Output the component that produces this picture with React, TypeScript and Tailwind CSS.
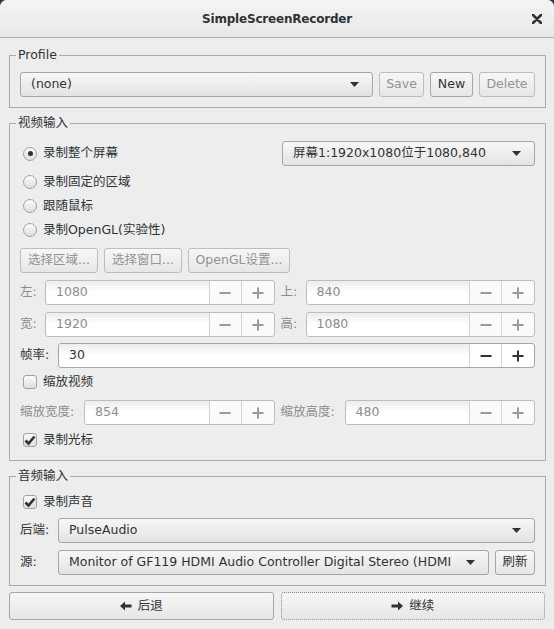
import React from "react";

const FONT = '"DejaVu Sans", "Noto Sans CJK SC", sans-serif';

function Arrow({ className = "" }: { className?: string }) {
  return (
    <svg width="9" height="5" viewBox="0 0 9 5" className={className}>
      <path d="M0 0 H9 L4.5 5 Z" fill="#2e3436" />
    </svg>
  );
}

function Combo({ label, className = "" }: { label: string; className?: string }) {
  return (
    <div
      className={`h-[25px] flex items-center rounded-[3px] border border-[#a6a6a6] bg-linear-to-b from-[#f7f7f7] to-[#e3e3e3] pl-[10px] pr-[13px] text-[#2e3436] ${className}`}
    >
      <span className="flex-1 truncate whitespace-nowrap">{label}</span>
      <Arrow className="shrink-0 ml-[8px]" />
    </div>
  );
}

function Btn({
  label,
  disabled,
  className = "",
}: {
  label: string;
  disabled?: boolean;
  className?: string;
}) {
  return (
    <div
      className={`h-[25px] flex items-center justify-center rounded-[3px] border whitespace-nowrap bg-linear-to-b from-[#f7f7f7] to-[#e6e6e6] ${
        disabled ? "border-[#bdbdbd] text-[#939393]" : "border-[#a6a6a6] text-[#2e3436]"
      } ${className}`}
    >
      {label}
    </div>
  );
}

function Minus({ color }: { color: string }) {
  return (
    <svg width="12" height="12" viewBox="0 0 12 12">
      <rect x="0.5" y="5" width="11" height="2" fill={color} />
    </svg>
  );
}

function Plus({ color }: { color: string }) {
  return (
    <svg width="12" height="12" viewBox="0 0 12 12">
      <rect x="0.5" y="5" width="11" height="2" fill={color} />
      <rect x="5" y="0.5" width="2" height="11" fill={color} />
    </svg>
  );
}

function Spin({ value, disabled }: { value: string; disabled?: boolean }) {
  const c = disabled ? "#9a9a9a" : "#2e3436";
  return (
    <div
      className={`h-[25px] flex-1 flex rounded-[3px] border ${
        disabled ? "border-[#bdbdbd] bg-[#fafafa]" : "border-[#a6a6a6] bg-white"
      }`}
    >
      <div
        className={`flex-1 flex items-center pl-[10px] rounded-l-[3px] bg-linear-to-b from-[#ececec] via-white to-white ${
          disabled ? "text-[#8b8e8f]" : "text-[#2e3436]"
        }`}
      >
        {value}
      </div>
      <div className="w-[32px] flex items-center justify-center border-l border-[#d3d3d3]">
        <Minus color={c} />
      </div>
      <div className="w-[33px] flex items-center justify-center border-l border-[#d3d3d3]">
        <Plus color={c} />
      </div>
    </div>
  );
}

function Radio({ checked, label }: { checked?: boolean; label: string }) {
  return (
    <div className="h-[24px] flex items-center pl-[3px]">
      <div className="w-[14px] h-[14px] rounded-full border border-[#a2a2a2] bg-linear-to-b from-[#fbfbfb] to-[#dedede] flex items-center justify-center">
        {checked && <div className="w-[5px] h-[5px] rounded-full bg-[#2e3436]" />}
      </div>
      <span className="ml-[6px] text-[#2e3436]">{label}</span>
    </div>
  );
}

function Check({ checked, label }: { checked?: boolean; label: string }) {
  return (
    <div className="h-[24px] flex items-center pl-[3px]">
      <div className="w-[14px] h-[14px] rounded-[3px] border border-[#a2a2a2] bg-linear-to-b from-[#fbfbfb] to-[#dedede] flex items-center justify-center">
        {checked && (
          <svg width="12" height="11" viewBox="0 0 12 11">
            <path d="M1.5 5.5 L4.5 8.5 L10.5 1.5" fill="none" stroke="#2e3436" strokeWidth="2.6" />
          </svg>
        )}
      </div>
      <span className="ml-[6px] text-[#2e3436]">{label}</span>
    </div>
  );
}

function Group({
  title,
  className = "",
  children,
}: {
  title: string;
  className?: string;
  children: React.ReactNode;
}) {
  return (
    <fieldset className={`min-w-0 ml-[9px] mr-[8px] border border-[#aaaaaa] px-[10px] ${className}`}>
      <legend className="-ml-[4px] px-[2px] leading-[16px] text-[#2e3436]">{title}</legend>
      {children}
    </fieldset>
  );
}

export default function App() {
  return (
    <div className="w-[554px] h-[629px] bg-[#233a5a]" style={{ fontFamily: FONT }}>
      <div className="w-full h-full rounded-t-[7px] bg-[#ededed] overflow-hidden text-[12.5px]">
        <div className="relative h-[38px] border-b border-[#b3b3b3] bg-linear-to-b from-[#f4f4f4] to-[#e8e8e8] flex items-center justify-center">
          <span className="font-bold text-[12px] tracking-[-0.2px] text-[#2e3436]">SimpleScreenRecorder</span>
          <svg
            width="10"
            height="10"
            viewBox="0 0 10 10"
            className="absolute right-[12px] top-[14px]"
          >
            <path d="M1 1 L9 9 M9 1 L1 9" stroke="#2e3436" strokeWidth="2.6" strokeLinecap="round" />
          </svg>
        </div>

        <Group title="Profile" className="mt-[9px] pt-[9px] pb-[10px]">
          <div className="flex gap-[6px]">
            <Combo label="(none)" className="flex-1" />
            <Btn label="Save" disabled className="w-[45px]" />
            <Btn label="New" className="w-[43px]" />
            <Btn label="Delete" disabled className="w-[56px]" />
          </div>
        </Group>

        <Group title="视频输入" className="mt-[7px] pt-[10px] pb-[8px]">
          <div className="flex items-center h-[25px]">
            <div className="flex-1">
              <Radio checked label="录制整个屏幕" />
            </div>
            <Combo label="屏幕1:1920x1080位于1080,840" className="w-[253px]" />
          </div>
          <div className="mt-[4px]">
            <Radio label="录制固定的区域" />
            <Radio label="跟随鼠标" />
            <Radio label="录制OpenGL(实验性)" />
          </div>
          <div className="flex gap-[6px] mt-[6px]">
            <Btn label="选择区域..." disabled className="w-[78px]" />
            <Btn label="选择窗口..." disabled className="w-[78px]" />
            <Btn label="OpenGL设置..." disabled className="w-[102px]" />
          </div>
          <div className="grid grid-cols-2 gap-x-[6px] gap-y-[7px] mt-[7px] text-[#8b8e8f]">
            <div className="flex items-center">
              <span className="w-[25px]">左:</span>
              <Spin value="1080" disabled />
            </div>
            <div className="flex items-center">
              <span className="w-[25px]">上:</span>
              <Spin value="840" disabled />
            </div>
            <div className="flex items-center">
              <span className="w-[25px]">宽:</span>
              <Spin value="1920" disabled />
            </div>
            <div className="flex items-center">
              <span className="w-[25px]">高:</span>
              <Spin value="1080" disabled />
            </div>
          </div>
          <div className="flex items-center mt-[6px]">
            <span className="w-[38px] text-[#2e3436]">帧率:</span>
            <Spin value="30" />
          </div>
          <div className="mt-[2px]">
            <Check label="缩放视频" />
          </div>
          <div className="grid grid-cols-2 gap-x-[6px] mt-[6px] text-[#8b8e8f]">
            <div className="flex items-center">
              <span className="w-[64px]">缩放宽度:</span>
              <Spin value="854" disabled />
            </div>
            <div className="flex items-center">
              <span className="w-[64px]">缩放高度:</span>
              <Spin value="480" disabled />
            </div>
          </div>
          <div className="mt-[3px]">
            <Check checked label="录制光标" />
          </div>
        </Group>

        <Group title="音频输入" className="mt-[7px] pt-[6px] pb-[10px]">
          <Check checked label="录制声音" />
          <div className="flex items-center mt-[4px]">
            <span className="w-[38px] text-[#2e3436]">后端:</span>
            <Combo label="PulseAudio" className="flex-1" />
          </div>
          <div className="flex items-center mt-[7px]">
            <span className="w-[38px] text-[#2e3436]">源:</span>
            <Combo
              label="Monitor of GF119 HDMI Audio Controller Digital Stereo (HDMI"
              className="flex-1 min-w-0"
            />
            <Btn label="刷新" className="w-[40px] ml-[6px]" />
          </div>
        </Group>

        <div className="mx-[9px] mt-[6px] grid grid-cols-2 gap-[7px]">
          <div className="h-[28px] flex items-center justify-center gap-[6px] rounded-[3px] border border-[#a6a6a6] bg-linear-to-b from-[#f7f7f7] to-[#e6e6e6] text-[#2e3436]">
            <svg width="12" height="10" viewBox="0 0 12 10">
              <path d="M0 5 L5 0.5 V3.5 H11.5 V6.5 H5 V9.5 Z" fill="#2e3436" />
            </svg>
            <span>后退</span>
          </div>
          <div className="h-[28px] flex items-center justify-center gap-[6px] rounded-[3px] border border-dotted border-[#8a8a8a] bg-linear-to-b from-[#f7f7f7] to-[#e6e6e6] text-[#2e3436]">
            <svg width="12" height="10" viewBox="0 0 12 10">
              <path d="M12 5 L7 0.5 V3.5 H0.5 V6.5 H7 V9.5 Z" fill="#2e3436" />
            </svg>
            <span>继续</span>
          </div>
        </div>
      </div>
    </div>
  );
}
